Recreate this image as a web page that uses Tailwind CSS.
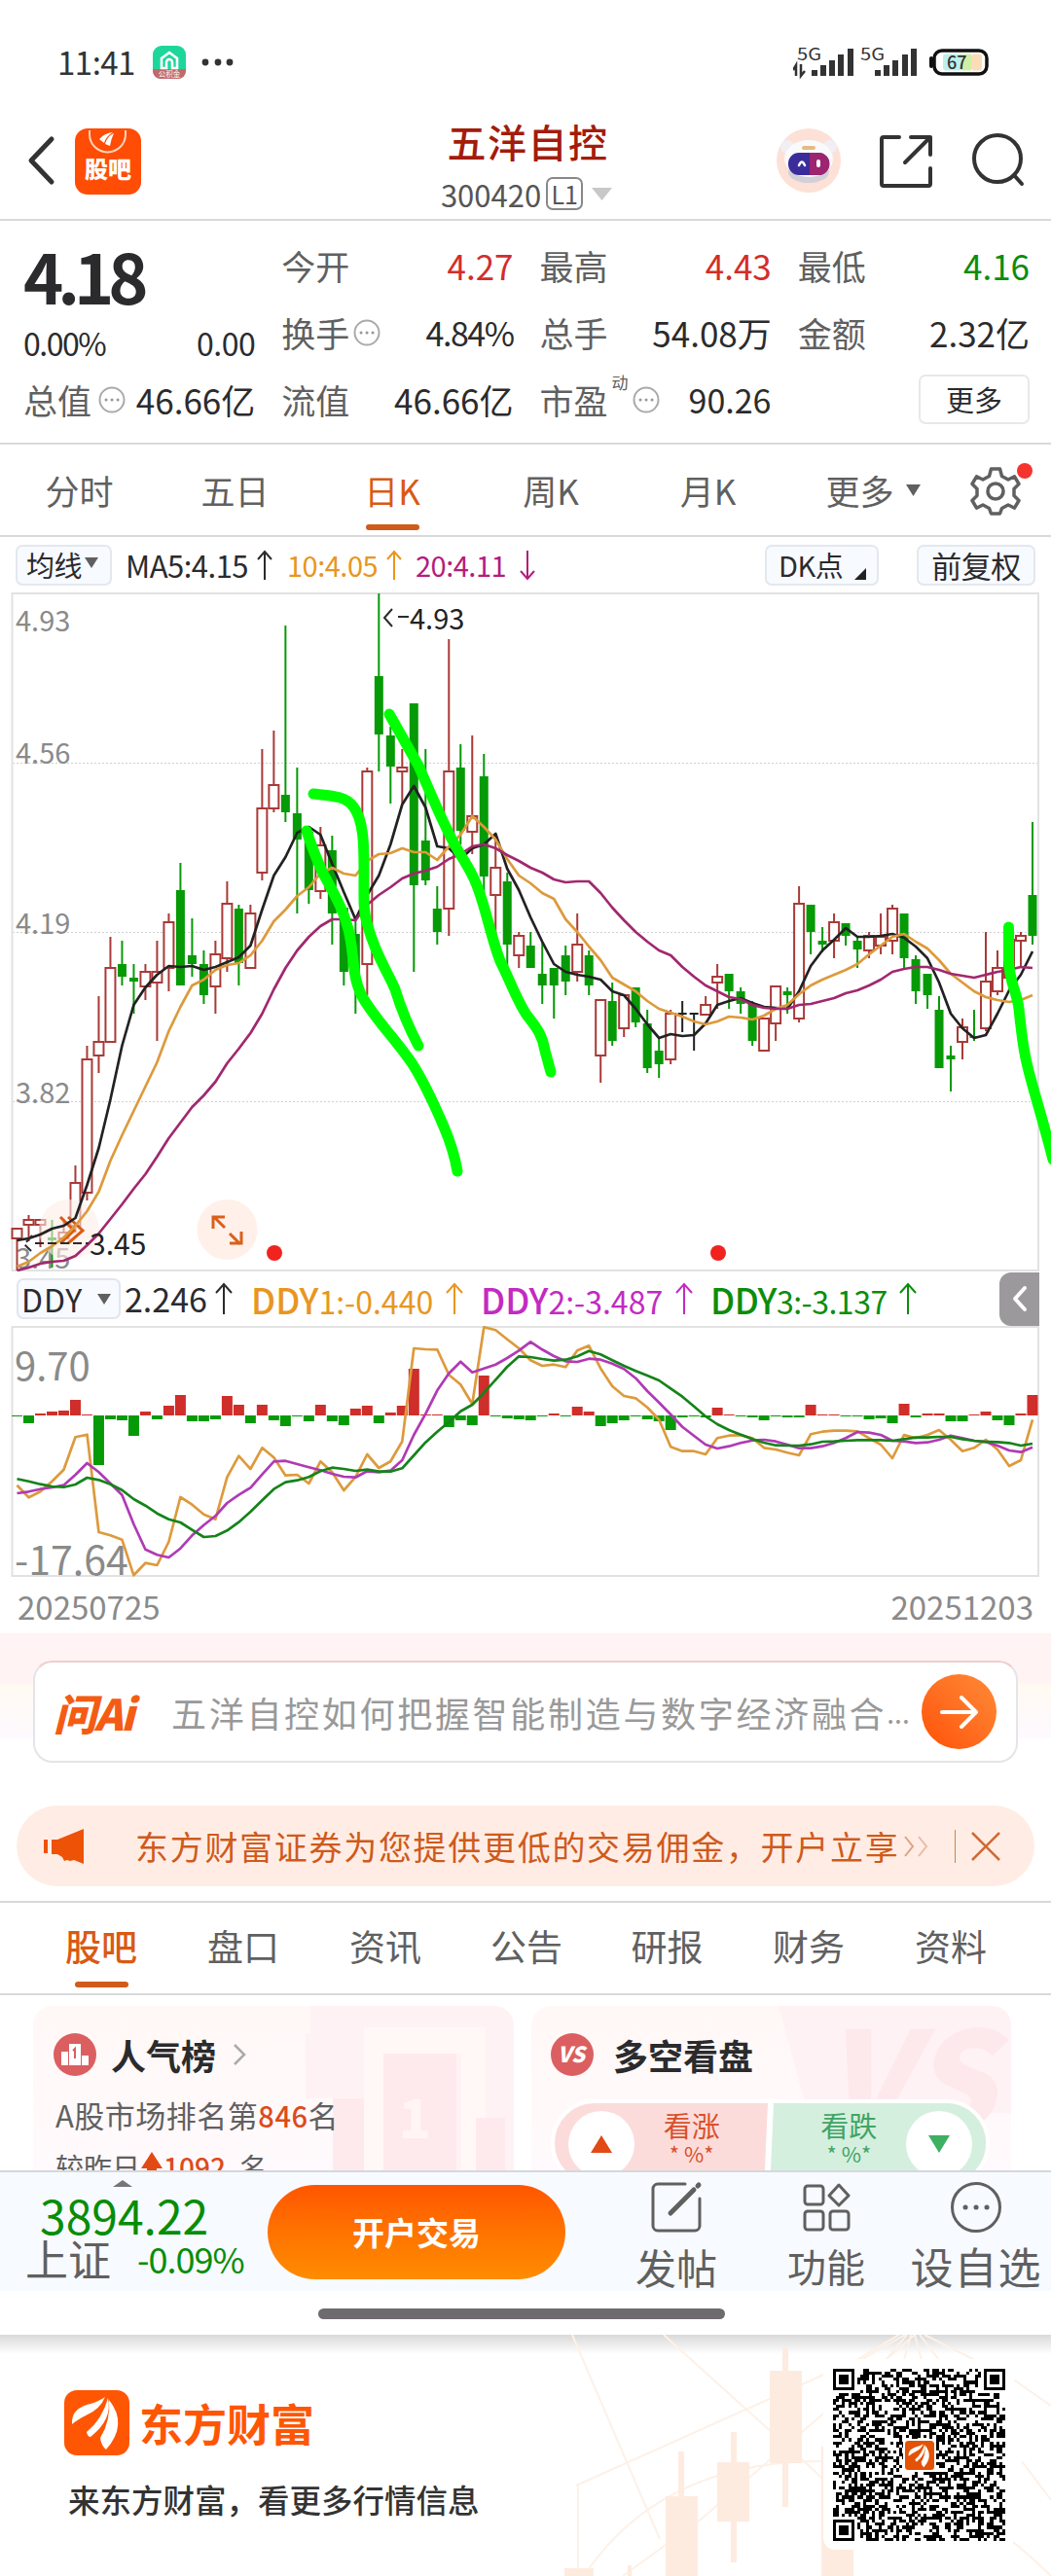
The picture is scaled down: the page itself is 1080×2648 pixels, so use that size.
<!DOCTYPE html>
<html lang="zh-CN">

<head>
    <meta charset="UTF-8">
    <meta name="viewport" content="width=device-width, initial-scale=1.0">
    <title>五洋自控 300420</title>
    <script src="https://cdn.jsdelivr.net/npm/@tailwindcss/browser@4"></script>
</head>

<body class="w-[1080px] h-[2648px] overflow-hidden bg-white text-[#2b2b2d] font-['Noto_Sans_CJK_SC',sans-serif] leading-none whitespace-nowrap">

    <!-- status bar -->
    <div class="h-[99px] pt-[28px] pl-[59px] pr-[63px] flex items-center justify-between">
        <div class="flex items-center">
            <span class="text-[33px] w-[98px] tracking-[-0.5px] text-[#333]">11:41</span>
            <svg class="w-[34px] h-[34px]" viewBox="0 0 34 34">
                <rect width="34" height="34" rx="9" fill="#1fd69a" />
                <path d="M0 24h34v2a8 8 0 0 1-8 8H8a8 8 0 0 1-8-8z" fill="#c2696b" />
                <path d="M9 23V13l8-6 8 6v10h-5v-6a3 3 0 0 0-6 0v6z" fill="none" stroke="#fff" stroke-width="2.6" />
                <text x="17" y="32" font-size="7.5" text-anchor="middle" fill="#fff">公积金</text>
            </svg>
            <svg class="w-[34px] h-[8px] ml-[16px]" viewBox="0 0 34 8" fill="#333">
                <circle cx="4" cy="4" r="3.4" /><circle cx="17" cy="4" r="3.4" /><circle cx="29" cy="4" r="3.4" />
            </svg>
        </div>
        <svg class="w-[202px] h-[44px]" viewBox="0 -5 202 44" fill="#333">
            <text x="4" y="15" font-size="17" textLength="25" lengthAdjust="spacingAndGlyphs">5G</text>
            <text x="69" y="15" font-size="17" textLength="25" lengthAdjust="spacingAndGlyphs">5G</text>
            <path d="M3 31V20L0 25M8 19v12l4-5" fill="none" stroke="#333" stroke-width="2.5" />
            <path d="M19 25h6v6h-6zM28 20h6v11h-6zM37 15h6v16h-6zM46 9h6v22h-6zM56 3h6v28h-6z" />
            <path d="M84 25h6v6h-6zM93 20h6v11h-6zM102 15h6v16h-6zM112 9h6v22h-6zM121 3h6v28h-6z" />
            <rect x="145" y="5" width="54" height="24" rx="8" fill="#fff" stroke="#111" stroke-width="3.5" />
            <rect x="154" y="8.500" width="22" height="17" rx="3" fill="#bdf0ec" />
            <rect x="174" y="8.500" width="9" height="17" fill="#d0efa6" />
            <rect x="183" y="8.500" width="11" height="17" rx="3" fill="#fbdcb8" />
            <path d="M142 13v8" stroke="#111" stroke-width="4" stroke-linecap="round" />
            <text x="158" y="24" font-size="18" font-weight="500">67</text>
        </svg>
    </div>

    <!-- title bar -->
    <header class="h-[128px] border-b-2 border-[#d9d9d9] flex justify-between pl-[28px] pr-[26px]">
        <div class="w-[330px] flex items-start">
            <svg class="w-[29px] h-[52px] mt-[40px]" viewBox="0 0 29 52" fill="none" stroke="#333" stroke-width="5" stroke-linecap="round" stroke-linejoin="round"><path d="M25 4L4 26l21 22" /></svg>
            <svg class="w-[68px] h-[68px] mt-[33px] ml-[20px]" viewBox="0 0 68 68">
                <rect width="68" height="68" rx="13" fill="#ff4d05" />
                <path d="M15 2v4a18 18 0 0 0 37 0V2" fill="none" stroke="#ffd3bf" stroke-width="2" />
                <path d="M25 11q5-6 14-7-7 4-9 11zM31 16q2-8 9-11-3 6-4 13z" fill="#fff" />
                <text x="34" y="51" font-size="24" font-weight="900" text-anchor="middle" fill="#fff">股吧</text>
            </svg>
        </div>
        <div class="flex flex-col items-center">
            <h1 class="text-[40px] font-medium tracking-[1.5px] text-[#a31c0b] mt-[26px] ml-[3px]">五洋自控</h1>
            <div class="flex items-center mt-[17px] text-[30px] text-[#555]">
                <span class="text-[31px]">300420</span>
                <span class="w-[38px] h-[34px] ml-[5px] rounded-[7px] border-2 border-[#888] text-[25px] flex items-center justify-center">L1</span>
                <svg class="w-[21px] h-[13px] ml-[9px]" viewBox="0 0 21 13" fill="#c8c8c8"><path d="M0 0h21L10.500 13z" /></svg>
            </div>
        </div>
        <div class="w-[330px] flex items-start justify-end">
            <svg class="w-[68px] h-[68px] mt-[32px]" viewBox="0 0 68 68">
                <circle cx="34" cy="34" r="33" fill="#fde1d6" />
                <circle cx="12" cy="20" r="7" fill="#f1eff3" /><circle cx="56" cy="20" r="7" fill="#f1eff3" />
                <ellipse cx="34" cy="46" rx="21" ry="11" fill="#d3cfd8" />
                <ellipse cx="34" cy="32" rx="25" ry="19" fill="#faf9fb" />
                <rect x="13" y="26" width="42" height="23" rx="11" fill="#3a2d9b" />
                <path d="M35 26h9a11 11 0 0 1 0 23h-9z" fill="#9c2470" />
                <path d="M24 39q3-7 6 0" fill="none" stroke="#fff" stroke-width="2.500" stroke-linecap="round" />
                <rect x="42" y="33" width="4" height="8" rx="2" fill="#fff" />
                <rect x="27" y="19" width="14" height="4" rx="2" fill="#e4ba87" />
            </svg>
            <svg class="w-[56px] h-[56px] mt-[39px] ml-[38px]" viewBox="0 0 56 56" fill="none" stroke="#333" stroke-width="4" stroke-linecap="round" stroke-linejoin="round"><path d="M21 3H5q-2 0-2 2v46q0 2 2 2h46q2 0 2-2V35M33 3h20v18M53 3L27 29" /></svg>
            <svg class="w-[56px] h-[56px] mt-[38px] ml-[39px]" viewBox="0 0 56 56" fill="none" stroke="#333" stroke-width="4" stroke-linecap="round"><circle cx="27" cy="26" r="24" /><path d="M44 43l8 9" /></svg>
        </div>
    </header>

    <!-- quote -->
    <section class="h-[230px] border-b-2 border-[#d9d9d9] pt-[10px] pl-[24px] pr-[22px] grid grid-cols-4 grid-rows-[70px_69px_69px] gap-x-[27px] content-start items-center text-[34px]">
        <div class="row-span-2 self-start pt-[11px]">
            <div class="text-[70px] font-bold tracking-[-6px]">4.18</div>
            <div class="flex justify-between mt-[18px] text-[32px] tracking-[-1.5px]"><span>0.00%</span><span class="tracking-[-0.5px]">0.00</span></div>
        </div>
        <div class="flex justify-between items-center"><span class="text-[#606060] text-[35px]">今开</span><span class="text-[#d32d2b] text-[35px]">4.27</span></div>
        <div class="flex justify-between items-center"><span class="text-[#606060] text-[35px]">最高</span><span class="text-[#d32d2b] text-[35px]">4.43</span></div>
        <div class="flex justify-between items-center"><span class="text-[#606060] text-[35px]">最低</span><span class="text-[#0b8d0b] text-[35px]">4.16</span></div>

        <div class="flex justify-between items-center"><span class="text-[#606060] text-[35px] flex items-center">换手<svg class="w-[28px] h-[28px] ml-[4px]" viewBox="0 0 28 28"><circle cx="14" cy="14" r="12.500" fill="none" stroke="#aaa" stroke-width="2" /><path d="M8 14h.1M14 14h.1M20 14h.1" stroke="#999" stroke-width="3" stroke-linecap="round" /></svg></span><span class="tracking-[-1.5px]">4.84%</span></div>
        <div class="flex justify-between items-center"><span class="text-[#606060] text-[35px]">总手</span><span class="text-[35px]">54.08万</span></div>
        <div class="flex justify-between items-center"><span class="text-[#606060] text-[35px]">金额</span><span class="text-[35px]">2.32亿</span></div>

        <div class="flex justify-between items-center"><span class="text-[#606060] text-[35px] flex items-center">总值<svg class="w-[28px] h-[28px] ml-[7px]" viewBox="0 0 28 28"><circle cx="14" cy="14" r="12.500" fill="none" stroke="#aaa" stroke-width="2" /><path d="M8 14h.1M14 14h.1M20 14h.1" stroke="#999" stroke-width="3" stroke-linecap="round" /></svg></span><span class="text-[35px]">46.66亿</span></div>
        <div class="flex justify-between items-center"><span class="text-[#606060] text-[35px]">流值</span><span class="text-[35px]">46.66亿</span></div>
        <div class="flex items-center"><span class="text-[#606060] text-[35px]">市盈</span><span class="text-[17px] text-[#606060] self-start -mt-[9px] ml-[4px]">动</span><svg class="w-[28px] h-[28px] ml-[4px]" viewBox="0 0 28 28"><circle cx="14" cy="14" r="12.500" fill="none" stroke="#aaa" stroke-width="2" /><path d="M8 14h.1M14 14h.1M20 14h.1" stroke="#999" stroke-width="3" stroke-linecap="round" /></svg><span class="ml-[30px]">90.26</span></div>
        <div class="flex justify-end"><span class="w-[114px] h-[51px] border-2 border-[#e8e8e8] rounded-[7px] text-[29px] flex items-center justify-center">更多</span></div>
    </section>

    <!-- period tabs -->
    <nav class="h-[95px] border-b-2 border-[#d9d9d9] flex text-[35px] text-[#606060]">
        <span class="w-[163px] pt-[29px] text-center">分时</span>
        <span class="w-[157px] pt-[29px] text-center">五日</span>
        <span class="w-[166px] pt-[29px] text-center text-[#d95a12] flex flex-col items-center">日K<i class="w-[55px] h-[6px] mt-[18px] rounded-full bg-[#cf5c1b]"></i></span>
        <span class="w-[160px] pt-[29px] text-center">周K</span>
        <span class="w-[163px] pt-[29px] text-center">月K</span>
        <span class="w-[176px] pt-[29px] flex justify-center">更多<svg class="w-[15px] h-[12px] mt-[12px] ml-[12px]" viewBox="0 0 15 12" fill="#606060"><path d="M0 0h15L7.500 12z" /></svg></span>
        <svg class="w-[66px] h-[60px] mt-[14px] ml-[11px]" viewBox="0 0 66 60" fill="none" stroke="#606060" stroke-width="3.500" stroke-linejoin="round">
            <path d="M22.500 11h9l2 7.500 6.500 3.500 6.500-3.200 4.500 7.700-5 5v7l5 5-4.500 7.700-6.500-3.200-6.500 3.500-2 5.500h-9l-2-5.500-6.500-3.500-6.500 3.200-4.500-7.700 5-5v-7l-5-5 4.500-7.700 6.500 3.200 6.500-3.500z" />
            <circle cx="27" cy="34" r="8" />
            <circle cx="57" cy="13" r="8" fill="#f5332f" stroke="none" />
        </svg>
    </nav>

    <!-- moving averages -->
    <div class="h-[57px] pl-[16px] pr-[16px] flex items-center text-[29px] tracking-[-0.5px]">
        <span class="w-[99px] h-[42px] border-2 border-[#e3e8ee] rounded-[7px] bg-[#f7faff] flex items-center pl-[9px]">均线<svg class="w-[14px] h-[11px] -mt-[4px] ml-[3px]" viewBox="0 0 14 11" fill="#606060"><path d="M0 0h14L7 11z" /></svg></span>
        <span class="ml-[14px] w-[135px] text-[31px]">MA5:4.15</span>
        <svg class="w-[16px] h-[32px]" viewBox="0 0 16 32" fill="none" stroke="#2b2b2d" stroke-width="2"><path d="M8 31V2M1 10l7-8 7 8" /></svg>
        <span class="ml-[15px] w-[102px] text-[#e8961f]">10:4.05</span>
        <svg class="w-[16px] h-[32px]" viewBox="0 0 16 32" fill="none" stroke="#e8961f" stroke-width="2"><path d="M8 31V2M1 10l7-8 7 8" /></svg>
        <span class="ml-[14px] w-[107px] text-[#b51c7c]">20:4.11</span>
        <svg class="w-[16px] h-[32px]" viewBox="0 0 16 32" fill="none" stroke="#b51c7c" stroke-width="2"><path d="M8 1v29M1 22l7 8 7-8" /></svg>
        <span class="ml-auto w-[117px] h-[42px] border-2 border-[#e3e8ee] rounded-[7px] bg-[#f7faff] flex items-center pl-[12px]">DK点<svg class="w-[12px] h-[12px] mt-[18px] ml-[12px]" viewBox="0 0 12 12" fill="#222"><path d="M12 0v12H0z" /></svg></span>
        <span class="ml-[39px] w-[122px] h-[42px] border-2 border-[#e3e8ee] rounded-[7px] bg-[#f7faff] flex items-center justify-center text-[31px]">前复权</span>
    </div>

    <!-- candles, y axis in page pixels -->
    <svg class="block w-[1080px] h-[698px]" viewBox="0 609 1080 698">
        <g stroke="#d0d0d0" stroke-width="1" stroke-dasharray="2 2"><path d="M13 784.500h1054M13 958.500h1054M13 1132.500h1054" /></g>
        <rect x="12.500" y="610" width="1054.500" height="696" fill="none" stroke="#e2e2e2" stroke-width="2" />
        <g font-size="29" fill="#8a8a8a">
            <text x="16" y="649">4.93</text><text x="16" y="785">4.56</text><text x="16" y="960">4.19</text>
            <text x="16" y="1134">3.82</text><text x="16" y="1304">3.45</text>
        </g>
        <g id="candles"></g>
        <circle cx="71" cy="1264" r="31" fill="#fdece6" opacity=".6" />
        <circle cx="233.500" cy="1264" r="31" fill="#fff0ea" />
        <path d="M62 1251l14 14-14 13M70 1251l15 14-15 13" fill="none" stroke="#dc5b12" stroke-width="3" />
        <path d="M231 1262l-11-11M219 1263v-12h12M236 1268l11 11M248 1266v12h-12" fill="none" stroke="#d9601a" stroke-width="3" />
        <g id="averages" fill="none" stroke-width="2.700" stroke-linejoin="round"></g>
        <path d="M33 1270l-8 9 8 8M36 1278h55" fill="none" stroke="#2b2b2d" stroke-width="2" stroke-dasharray="9 4" />
        <path d="M403 626l-8 9 8 9M409 634h11" fill="none" stroke="#2b2b2d" stroke-width="2" />
        <text x="421" y="647" font-size="29" fill="#222">4.93</text>
        <text x="92" y="1290" font-size="30" fill="#222">3.45</text>
        <circle cx="282" cy="1288" r="8" fill="#f0231f" /><circle cx="738" cy="1288" r="8" fill="#f0231f" />
    </svg>

    <!-- DDY legend -->
    <div class="h-[56px] pl-[17px] pr-[12px] flex items-center text-[32px]">
        <span class="w-[107px] h-[42px] border-2 border-[#e3e5ee] rounded-[7px] bg-[#f7faff] flex items-center pl-[3px] tracking-[1px]">DDY<svg class="w-[14px] h-[11px] ml-[15px]" viewBox="0 0 14 11" fill="#606060"><path d="M0 0h14L7 11z" /></svg></span>
        <span class="ml-[4px] w-[93px] text-[34px]">2.246</span>
        <svg class="w-[18px] h-[34px]" viewBox="0 0 18 34" fill="none" stroke="#2b2b2d" stroke-width="2"><path d="M9 33V2M1 11l8-9 8 9" /></svg>
        <span class="ml-[19px] w-[200px] text-[#e8961f]"><b class="font-medium text-[36px]">DDY</b>1:-0.440</span>
        <svg class="w-[18px] h-[34px]" viewBox="0 0 18 34" fill="none" stroke="#e8961f" stroke-width="2"><path d="M9 33V2M1 11l8-9 8 9" /></svg>
        <span class="ml-[18px] w-[200px] text-[#c22bc2]"><b class="font-medium text-[36px]">DDY</b>2:-3.487</span>
        <svg class="w-[18px] h-[34px]" viewBox="0 0 18 34" fill="none" stroke="#c22bc2" stroke-width="2"><path d="M9 33V2M1 11l8-9 8 9" /></svg>
        <span class="ml-[18px] w-[194px] text-[#0b8d0b] tracking-[-0.5px]"><b class="font-medium text-[36px]">DDY</b>3:-3.137</span>
        <svg class="w-[18px] h-[34px]" viewBox="0 0 18 34" fill="none" stroke="#0b8d0b" stroke-width="2"><path d="M9 33V2M1 11l8-9 8 9" /></svg>
        <span class="ml-auto w-[41px] h-[55px] rounded-l-[12px] bg-[#9b999b] flex items-center justify-center">
            <svg class="w-[16px] h-[28px]" viewBox="0 0 16 28" fill="none" stroke="#fff" stroke-width="4" stroke-linecap="round" stroke-linejoin="round"><path d="M13 3L3 14l10 11" /></svg>
        </span>
    </div>

    <svg class="block w-[1080px] h-[258px]" viewBox="0 1363 1080 258">
        <rect x="12.500" y="1364" width="1054.500" height="256" fill="none" stroke="#e2e2e2" stroke-width="2" />
        <g id="bars"></g>
        <g fill="#8a8a8a"><text x="15" y="1419" font-size="40">9.70</text><text x="15" y="1619" font-size="41">-17.64</text></g>
        <g id="ddy" fill="none" stroke-width="2.700" stroke-linejoin="round"></g>
    </svg>
    <div class="h-[58px] px-[18px] pt-[14px] flex justify-between text-[33px] text-[#8a8a8a]"><span>20250725</span><span>20251203</span></div>

    <!-- ask AI -->
    <section class="h-[177px] px-[34px] pt-[28px] bg-linear-to-b from-[#fff3f3] from-46% via-[#fffaf2] via-50% to-[#fdf9ff] to-100% [background-size:100%_108px] bg-no-repeat">
        <div class="h-[105px] bg-white border-2 border-[#e4e4e9] border-t-[#f0cccc] rounded-[20px] flex items-center pl-[19px] pr-[20px]">
            <span class="w-[121px] text-[44px] font-black italic tracking-[-2px] text-[#f45c14]">问Ai</span>
            <span class="text-[36px] tracking-[2.7px] text-[#999]">五洋自控如何把握智能制造与数字经济融合</span><span class="text-[28px] text-[#999]">...</span>
            <span class="ml-auto w-[77px] h-[77px] rounded-full bg-linear-to-bl from-[#ff8a35] to-[#ff4f00] flex items-center justify-center shrink-0">
                <svg class="w-[40px] h-[34px]" viewBox="0 0 40 34" fill="none" stroke="#fff" stroke-width="4" stroke-linecap="round" stroke-linejoin="round"><path d="M2 17h35M22 2l15 15-15 15" /></svg>
            </span>
        </div>
    </section>

    <!-- promotion -->
    <div class="h-[83px] ml-[17px] mr-[17px] rounded-full bg-[#ffede5] flex items-center pl-[28px] pr-[35px]">
        <svg class="w-[42px] h-[38px]" viewBox="0 0 42 38" fill="#ee5207"><path d="M0 12h4v14H0zM8 12h6L41 1v36l-10-4-4 1-3-1-3 1-2-4-5-3H8z" /></svg>
        <span class="ml-[52px] text-[34px] tracking-[1.7px] text-[#cf5a1c]">东方财富证券为您提供更低的交易佣金，开户立享</span>
        <svg class="w-[28px] h-[24px] ml-[4px]" viewBox="0 0 28 24" fill="none" stroke-width="2"><path d="M2 2l8 10-8 10" stroke="#e0a080" /><path d="M16 2l8 10-8 10" stroke="#e9bca6" /></svg>
        <i class="w-px h-[34px] bg-[#d08050] ml-auto"></i>
        <svg class="w-[30px] h-[30px] ml-[16px]" viewBox="0 0 30 30" fill="none" stroke="#d06a35" stroke-width="2.500"><path d="M1 1l28 28M29 1L1 29" /></svg>
    </div>

    <!-- content tabs -->
    <nav class="mt-[15px] h-[97px] border-y-2 border-[#d9d9d9] pl-[31px] pt-[26px] flex text-[37px] text-[#606060]">
        <span class="w-[146px] flex flex-col items-center text-[#d95a12] font-medium">股吧<i class="w-[55px] h-[6px] mt-[18px] rounded-full bg-[#cf5c1b]"></i></span>
        <span class="w-[146px] text-center">盘口</span>
        <span class="w-[146px] text-center">资讯</span>
        <span class="w-[144px] text-center">公告</span>
        <span class="w-[145px] text-center">研报</span>
        <span class="w-[146px] text-center">财务</span>
        <span class="w-[146px] text-center">资料</span>
    </nav>

    <!-- cards -->
    <section class="h-[180px] pt-[11px] pl-[34px] overflow-hidden flex gap-[18px]">
        <div class="relative w-[494px] h-[230px] rounded-[20px] bg-linear-to-b from-[#fff8f6] to-[#fffaff] overflow-hidden">
            <svg class="absolute inset-0 w-[494px] h-[230px]" viewBox="0 0 494 230">
                <path d="M285 0h209v230H310V95h-30V28h5z" fill="#fff2f4" />
                <path d="M340 22h125v150h-25V49h-75v181h-25z" fill="#fff8f6" />
                <path d="M360 49h75v181h-75zM308 95h32v135h-32zM455 115h30v115h-30z" fill="#feeaed" />
                <text x="376" y="136" font-size="54" font-weight="900" fill="#fff5f5">1</text>
            </svg>
            <div class="relative pl-[21px] pt-[28px]">
                <div class="flex items-center h-[44px]">
                    <svg class="w-[44px] h-[44px]" viewBox="0 0 44 44"><circle cx="22" cy="22" r="22" fill="#db5f60" /><path d="M8 19h7v14H8zM16 11h12v22H16zM29 23h7v10h-7z" fill="#fff" /><path d="M20 18l2-2v10" fill="none" stroke="#db5f60" stroke-width="2" /></svg>
                    <b class="ml-[15px] text-[36px]">人气榜</b>
                    <svg class="w-[14px] h-[22px] ml-[17px]" viewBox="0 0 14 22" fill="none" stroke="#aaa" stroke-width="2.500"><path d="M2 1l10 10L2 21" /></svg>
                </div>
                <p class="mt-[24px] ml-[2px] text-[31px] tracking-[0.5px] text-[#606060]">A股市场排名第<b class="text-[#dc4b1b] font-medium text-[29px]">846</b>名</p>
                <p class="mt-[24px] ml-[2px] text-[29px] text-[#606060] flex">较昨日<svg class="w-[24px] h-[30px] -mt-[1px]" viewBox="0 0 24 30" fill="#e24a15"><path d="M12 0l11 17h-6v12H7V17H1z" /></svg><b class="text-[#dc4b1b] font-medium text-[28px]">1092</b><span class="ml-[14px]">名</span></p>
            </div>
        </div>
        <div class="relative w-[493px] h-[230px] rounded-[20px] bg-linear-to-b from-[#fff8f6] to-[#fffaff] overflow-hidden">
            <svg class="absolute inset-0 w-[493px] h-[230px]" viewBox="0 0 493 230">
                <path d="M254 0h239v110H284z" fill="#fff2f4" />
                <text x="298" y="128" font-size="140" font-weight="900" font-style="italic" fill="#fde9ec">VS</text>
            </svg>
            <div class="relative pl-[20px] pt-[28px]">
                <div class="flex items-center h-[44px]">
                    <svg class="w-[44px] h-[44px]" viewBox="0 0 44 44"><circle cx="22" cy="22" r="22" fill="#db5f60" /><text x="21" y="30" font-size="22" font-weight="900" font-style="italic" text-anchor="middle" fill="#fff">VS</text></svg>
                    <b class="ml-[20px] text-[36px]">多空看盘</b>
                </div>
                <div class="relative mt-[24px] w-[451px] h-[90px] border-4 border-white rounded-[45px] overflow-hidden bg-[#fcdcdb] flex">
                    <svg class="absolute inset-0 w-[443px] h-[90px]" viewBox="0 0 443 90"><path d="M222 0h221v90H218z" fill="#d5efde" /><path d="M222 0l-4 90" stroke="#fff" stroke-width="6" /></svg>
                    <div class="relative flex w-full pt-[8px] px-[14px] justify-between">
                        <span class="w-[68px] h-[68px] rounded-full bg-white flex items-center justify-center"><svg class="w-[22px] h-[18px]" viewBox="0 0 22 18" fill="#e24a15"><path d="M11 0l11 18H0z" /></svg></span>
                        <span class="text-[29px] text-center text-[#d9502a] mr-[48px]">看涨<br><span class="block text-[22px] mt-[3px]">* %*</span></span>
                        <span class="text-[29px] text-center text-[#3fa566] ml-[26px]">看跌<br><span class="block text-[22px] mt-[3px]">* %*</span></span>
                        <span class="w-[68px] h-[68px] rounded-full bg-white flex items-center justify-center"><svg class="w-[22px] h-[18px]" viewBox="0 0 22 18" fill="#3db062"><path d="M0 0h22L11 18z" /></svg></span>
                    </div>
                </div>
            </div>
        </div>
    </section>

    <!-- bottom bar -->
    <footer class="h-[124px] bg-[#f7faff] border-t-2 border-[#d4d8dd] flex">
        <div class="w-[275px] pl-[26px]">
            <svg class="w-[20px] h-[7px] ml-[90px] mt-[8px]" viewBox="0 0 20 7" fill="#777"><path d="M10 0l10 7H0z" /></svg>
            <div class="ml-[15px] mt-[5px] text-[48px] leading-[46px] text-[#078d07]">3894.22</div>
            <div class="flex items-center text-[44px] leading-[44px] text-[#606060]">上证<span class="ml-[27px] text-[36px] tracking-[-1px] text-[#078d07]">-0.09%</span></div>
        </div>
        <div class="w-[306px] h-[97px] mt-[13px] rounded-full bg-linear-to-b from-[#ff5500] to-[#ff8c00] text-white font-bold text-[33px] flex items-center justify-center">开户交易</div>
        <div class="ml-[50px] w-[128px] flex flex-col items-center text-[42px] text-[#606060]">
            <svg class="w-[54px] h-[54px] mt-[9px] mb-[13px]" viewBox="0 0 54 54" fill="none" stroke="#606060" stroke-width="3" stroke-linecap="round"><path d="M36 3H8a5 5 0 0 0-5 5v38a5 5 0 0 0 5 5h38a5 5 0 0 0 5-5V18" /><path d="M21 33L45 9M49 5l1-1" stroke-width="5" /></svg>
            发帖
        </div>
        <div class="ml-[26px] w-[128px] flex flex-col items-center text-[40px] text-[#606060]">
            <svg class="w-[50px] h-[54px] mt-[9px] mb-[13px]" viewBox="0 0 50 54" fill="none" stroke="#606060" stroke-width="3"><rect x="3" y="5" width="19" height="19" rx="3" /><rect x="3" y="31" width="19" height="19" rx="3" /><rect x="29" y="31" width="19" height="19" rx="3" /><path d="M38 4l10 11-10 10L28 15z" stroke-linejoin="round" /></svg>
            功能
        </div>
        <div class="ml-[17px] w-[146px] flex flex-col items-center text-[44px] tracking-[1px] text-[#606060]">
            <svg class="w-[54px] h-[54px] mt-[9px] mb-[11px]" viewBox="0 0 54 54"><circle cx="27" cy="27" r="24.500" fill="none" stroke="#606060" stroke-width="3" /><path d="M16 27h.1M27 27h.1M38 27h.1" stroke="#606060" stroke-width="5" stroke-linecap="round" /></svg>
            设自选
        </div>
    </footer>
    <div class="h-[45px] pt-[18px] flex justify-center pr-[8px]"><i class="w-[418px] h-[11px] rounded-full bg-[#6d6b6e]"></i></div>

    <!-- share strip -->
    <section class="relative h-[248px] overflow-hidden bg-linear-to-b from-[#d9d9d9] to-white to-8% flex justify-between">
        <svg class="absolute inset-0 w-[1080px] h-[248px]" viewBox="0 0 1080 248">
            <g fill="none" stroke="#fdf1e7" stroke-width="2">
                <path d="M588 0l90 210M682 0l155 140 60 60M592 155l290-130 50-30M940 0L720 190 640 248M600 248q80-120 250-118 120 10 230 118M594 155v93M930 0l-45 26M932 0l-22 26M936 0l-7 26M940 0l7 26M945 0l20 26M950 0l60 30M1040 45l40 28M1050 130l30 40" />
            </g>
            <g fill="#feebdf">
                <path d="M791 37h33v95h-33zM804 12h6v165h-6zM737 131h33v61h-33zM751 100h6v134h-6zM684 166h33v82h-33zM697 120h6v50h-6zM844 200h33v48h-33zM844 115h3v90h-3zM580 240h30v8h-30zM645 237h4v11h-4z" />
            </g>
        </svg>
        <div class="relative pl-[66px] pt-[57px]">
            <div class="flex items-center">
                <svg class="w-[67px] h-[67px]" viewBox="0 0 67 67"><rect width="67" height="67" rx="13" fill="#ff5604" /><path d="M8 35q-1-15 15-20 12-3 19-8-5 12-18 18-10 5-16 10zM27 48q-3 0-4-5 16-13 22-35 5 22-18 40zM43 61q-5-4-6-12 11-18 9-39 20 25-3 51z" fill="#fff" /></svg>
                <b class="ml-[10px] text-[45px] font-bold text-[#ff5604]">东方财富</b>
            </div>
            <p class="mt-[29px] ml-[4px] text-[32.500px] font-medium text-[#333]">来东方财富，看更多行情信息</p>
        </div>
        <div class="relative w-[196px] h-[196px] mt-[25px] mr-[38px] rounded-[12px] bg-white flex items-center justify-center">
            <svg id="qr" class="w-[177px] h-[177px]" viewBox="0 0 57 57" shape-rendering="crispEdges"></svg>
            <span class="absolute left-[82px] top-[82px] w-[34px] h-[34px] bg-white flex items-center justify-center">
                <svg class="w-[30px] h-[30px]" viewBox="0 0 67 67"><rect width="67" height="67" rx="8" fill="#e35205" /><path d="M8 35q-1-15 15-20 12-3 19-8-5 12-18 18-10 5-16 10zM27 48q-3 0-4-5 16-13 22-35 5 22-18 40zM43 61q-5-4-6-12 11-18 9-39 20 25-3 51z" fill="#fff" /></svg>
            </span>
        </div>
    </section>

    <!-- hand drawn marks, the last one runs off the right edge -->
    <svg class="absolute left-0 top-[610px] w-[1080px] h-[697px] pointer-events-none" viewBox="0 610 1080 697" fill="none" stroke="#00ff00" stroke-width="11" stroke-linecap="round" stroke-linejoin="round">
        <path d="M322 816C340 818 355 818 363 829C374 843 374 870 374 895C374 925 373 938 378 952C386 982 398 998 406 1017C413 1040 421 1058 430 1075" />
        <path d="M315 854C320 870 325 882 331 896C341 915 351 930 356 949C365 973 360 1002 372 1024C384 1046 408 1070 424 1094C438 1116 447 1137 456 1158C462 1172 468 1192 470 1204" />
        <path d="M400 734L430 787C441 812 450 834 461 856C472 880 482 889 490 910C500 936 504 962 514 988C526 1012 531 1028 541 1043C550 1055 557 1062 560 1080L566 1102" />
        <path d="M1036.500 953V987C1037 1010 1045 1019 1047 1037C1051 1075 1053 1087 1060 1112C1068 1141 1075 1164 1082 1192" />
    </svg>

    <script>
        const NS = "http://www.w3.org/2000/svg";
        const RED = "#a93a38", GREEN = "#069a06", BLACK = "#222222";
        const xAt = i => 17.5 + i * 11.994;

        function add(parent, tag, attrs) {
            const el = document.createElementNS(NS, tag);
            for (const key in attrs) el.setAttribute(key, attrs[key]);
            parent.appendChild(el);
        }

        // colour, body top, body bottom, high, low
        const candles = [
            "r 1263 1273 1263 1306", "r 1254 1259 1249 1276", "r 1254 1259 1254 1282", "g 1272 1275 1254 1303", "r 1267 1273 1253 1277",
            "r 1216 1260 1198 1267", "r 1089 1226 1075 1234", "r 1071 1085 1024 1103", "r 995 1071 963 1071", "g 991 1004 967 1013",
            "g 1005 1009 991 1042", "r 999 1014 991 1028", "r 999 1010 967 1070", "r 948 995 939 1019", "g 915 1013 887 1013",
            "g 982 991 944 1004", "g 991 1023 977 1032", "r 981 1014 967 1042", "r 929 985 906 999", "g 934 990 930 1013",
            "r 939 995 930 995", "r 831 897 770 905", "r 807 831 751 835", "g 817 835 643 845", "g 836 863 789 939",
            "g 855 915 855 929", "r 869 916 850 924", "g 874 939 859 971", "g 933 999 930 1013", "g 960 1009 945 1042",
            "r 793 991 789 1023", "g 695 755 610 793", "g 756 788 747 826", "r 789 793 770 826", "g 723 910 723 999",
            "g 864 905 770 910", "g 934 958 911 971", "r 793 934 657 962", "g 789 854 765 868", "r 839 855 756 878",
            "g 798 901 775 925", "r 892 920 863 963", "g 906 971 897 996", "r 962 982 958 995", "g 972 995 958 995",
            "g 1001 1013 968 1032", "g 995 1013 995 1047", "g 982 1009 972 1023", "r 971 999 939 1009", "g 982 1013 977 1023",
            "r 1028 1085 1028 1113", "g 1029 1070 1010 1075", "r 1023 1057 1023 1066", "g 1015 1051 1015 1056", "g 1052 1098 1038 1103",
            "g 1080 1094 1067 1108", "r 1042 1089 1038 1094", "k 1041 1043 1029 1061", "k 1041 1043 1042 1080", "r 1033 1043 1024 1043",
            "r 1004 1010 991 1037", "g 1001 1019 1001 1037", "g 1019 1032 1015 1042", "g 1032 1070 1029 1075", "r 1047 1080 1047 1080",
            "r 1014 1052 1014 1070", "g 1019 1023 1015 1042", "r 929 1047 911 1051", "g 930 958 930 981", "g 967 971 953 979",
            "r 948 967 939 985", "g 949 962 949 972", "g 967 976 963 995", "r 962 977 958 985", "r 963 972 939 981",
            "r 934 967 930 981", "g 939 985 939 995", "g 986 1019 982 1032", "g 1001 1023 1001 1037", "g 1038 1098 1024 1098",
            "g 1085 1089 1075 1122", "r 1056 1071 1047 1089", "g 1065 1067 1038 1070", "r 1009 1057 958 1060", "r 995 1019 977 1023",
            "r 966 1005 966 1010", "r 962 967 958 995", "g 920 962 845 971"
        ];
        const candleGroup = document.querySelector("#candles");
        candles.forEach((row, i) => {
            const [kind, top, bottom, high, low] = row.split(" ").map((v, n) => n ? Number(v) : v);
            const color = { r: RED, g: GREEN, k: BLACK }[kind];
            const x = xAt(i);
            if (kind === "r") {
                add(candleGroup, "path", { d: `M${x} ${high}V${top}M${x} ${bottom}V${low}`, stroke: color, "stroke-width": 2 });
                add(candleGroup, "rect", { x: x - 5, y: top, width: 10, height: bottom - top, fill: "#fff", stroke: color, "stroke-width": 2 });
            } else {
                add(candleGroup, "path", { d: `M${x} ${high}V${low}`, stroke: color, "stroke-width": 2 });
                add(candleGroup, "rect", { x: x - 4.5, y: top, width: 9, height: bottom - top, fill: color });
            }
        });

        function line(parent, values, color, toY) {
            const points = values.map((v, i) => `${xAt(i).toFixed(1)},${toY(v).toFixed(1)}`).join(" ");
            add(parent, "polyline", { points, stroke: color });
        }

        const ma5 = [1275, 1273, 1269, 1263, 1260, 1252, 1218, 1180, 1130, 1075, 1033, 1015, 1002, 993, 994, 993, 997, 994, 989, 984, 972, 935, 900, 881, 856, 850, 858, 888, 917, 945, 920, 900, 868, 827, 808, 830, 870, 872, 883, 872, 868, 857, 893, 915, 943, 968, 991, 999, 1002, 1004, 1007, 1019, 1023, 1037, 1053, 1067, 1063, 1065, 1064, 1052, 1033, 1029, 1026, 1031, 1035, 1036, 1037, 1019, 993, 977, 966, 954, 963, 963, 962, 960, 964, 973, 985, 1010, 1042, 1057, 1067, 1064, 1042, 1018, 1002, 978];
        const ma10 = [1302, 1297, 1288, 1281, 1272, 1260, 1245, 1225, 1193, 1167, 1142, 1117, 1092, 1060, 1035, 1013, 1007, 997, 992, 990, 982, 967, 947, 935, 921, 912, 898, 892, 898, 900, 885, 878, 877, 872, 876, 876, 884, 870, 858, 839, 850, 863, 883, 900, 908, 918, 924, 945, 958, 973, 987, 1005, 1012, 1019, 1029, 1037, 1041, 1045, 1050, 1053, 1050, 1045, 1046, 1048, 1044, 1037, 1033, 1022, 1013, 1007, 1002, 997, 991, 981, 972, 963, 960, 968, 975, 987, 1001, 1010, 1019, 1025, 1028, 1030, 1028, 1023];
        const ma20 = [1306, 1303, 1299, 1297, 1296, 1291, 1280, 1268, 1253, 1238, 1222, 1207, 1189, 1170, 1154, 1138, 1126, 1112, 1093, 1078, 1062, 1042, 1017, 995, 977, 963, 952, 945, 945, 946, 930, 920, 912, 903, 898, 895, 891, 883, 878, 870, 868, 872, 879, 885, 892, 897, 904, 907, 906, 906, 918, 933, 946, 958, 968, 977, 982, 994, 1004, 1013, 1019, 1025, 1027, 1033, 1036, 1037, 1037, 1033, 1032, 1029, 1026, 1021, 1018, 1013, 1007, 999, 996, 994, 994, 997, 1001, 1003, 1005, 1002, 999, 997, 994, 995];
        const averages = document.querySelector("#averages");
        line(averages, ma5, "#222222", v => v);
        line(averages, ma10, "#dd9a3c", v => v);
        line(averages, ma20, "#a1286f", v => v);

        // bar heights around the zero line, positive is up
        const bars = [-1, -8, 2, 4, 5, 16, 1, -51, -4, -5, -21, 4, -4, 10, 21, -6, -6, -4, 20, 11, -8, 11, -5, -11, -1, -6, 11, -6, -10, 7, 10, -8, 3, 10, 48, 1, 1, -12, -5, -10, 41, -1, -3, -4, -5, -1, 2, -1, 9, 4, -11, -8, -5, -1, -4, -6, -15, -2, -1, -2, 8, 1, -1, -2, -5, -1, -2, -2, 11, 1, 1, -1, -1, -4, -3, -8, 12, -2, 2, 2, -6, -6, 1, 4, -5, -10, 2, 21];
        const barGroup = document.querySelector("#bars");
        bars.forEach((v, i) => add(barGroup, "rect", {
            x: xAt(i) - 5.5, y: v > 0 ? 1455 - v : 1455, width: 11, height: Math.abs(v), fill: v > 0 ? "#cf2e2a" : GREEN
        }));

        const ddy1 = [680, 718, 700, 668, 632, 532, 524, 825, 835, 848, 958, 920, 927, 855, 717, 740, 770, 785, 655, 590, 630, 565, 595, 650, 648, 675, 607, 640, 696, 655, 585, 627, 607, 545, 258, 261, 262, 340, 370, 430, 193, 202, 230, 258, 295, 312, 308, 316, 265, 250, 320, 375, 405, 412, 440, 478, 562, 575, 575, 585, 535, 527, 526, 535, 565, 570, 580, 588, 523, 515, 512, 512, 514, 535, 555, 597, 525, 535, 525, 510, 540, 575, 565, 540, 570, 621, 603, 478];
        const ddy2 = [705, 700, 692, 687, 680, 648, 612, 640, 675, 710, 800, 878, 895, 903, 875, 835, 803, 775, 735, 710, 688, 647, 607, 605, 615, 625, 634, 645, 654, 656, 637, 640, 635, 603, 525, 460, 388, 335, 299, 332, 320, 308, 288, 265, 238, 262, 282, 298, 300, 290, 293, 305, 322, 350, 390, 425, 462, 500, 528, 555, 567, 560, 550, 542, 540, 545, 555, 566, 566, 560, 550, 535, 516, 518, 525, 543, 545, 550, 548, 540, 527, 535, 543, 547, 558, 573, 578, 563];
        const ddy3 = [661, 668, 677, 684, 686, 678, 657, 664, 677, 695, 723, 743, 767, 785, 795, 818, 840, 837, 820, 794, 762, 727, 692, 671, 665, 655, 637, 626, 630, 636, 632, 638, 638, 628, 588, 548, 515, 485, 452, 432, 395, 355, 315, 283, 285, 291, 296, 293, 283, 266, 277, 295, 312, 328, 342, 357, 382, 407, 437, 468, 492, 510, 524, 538, 549, 557, 558, 558, 554, 546, 545, 543, 541, 541, 541, 543, 538, 533, 533, 531, 531, 538, 543, 546, 547, 550, 558, 552];
        const ddy = document.querySelector("#ddy");
        line(ddy, ddy1, "#dd9a3c", v => 1300 + v / 3);
        line(ddy, ddy2, "#b03ab5", v => 1300 + v / 3);
        line(ddy, ddy3, "#15831a", v => 1300 + v / 3);

        // code modules: seeded noise plus the finder squares
        const N = 57;
        let seed = 20251203, d = "";
        const inFinder = (r, c) => (r < 8 && c < 8) || (r < 8 && c > N - 9) || (r > N - 9 && c < 8);
        for (let r = 0; r < N; r++) {
            for (let c = 0; c < N; c++) {
                seed = (seed * 1664525 + 1013904223) % 4294967296;
                if (!inFinder(r, c) && seed / 4294967296 < 0.5) d += `M${c} ${r}h1v1h-1z`;
            }
        }
        const finders = [[0, 0], [N - 7, 0], [0, N - 7]];
        finders.forEach(([x, y]) => {
            d += `M${x} ${y}h7v1h-7zM${x} ${y + 6}h7v1h-7zM${x} ${y + 1}h1v5h-1zM${x + 6} ${y + 1}h1v5h-1zM${x + 2} ${y + 2}h3v3h-3z`;
        });
        add(document.querySelector("#qr"), "path", { d, fill: "#000" });
    </script>
</body>

</html>
